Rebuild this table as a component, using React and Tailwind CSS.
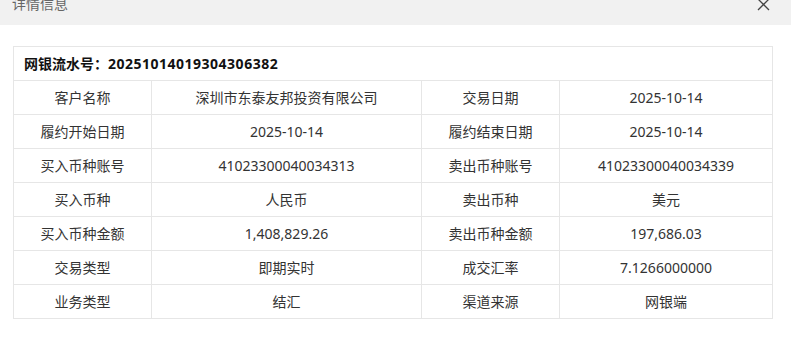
const rows = [
  ["客户名称", "深圳市东泰友邦投资有限公司", "交易日期", "2025-10-14"],
  ["履约开始日期", "2025-10-14", "履约结束日期", "2025-10-14"],
  ["买入币种账号", "41023300040034313", "卖出币种账号", "41023300040034339"],
  ["买入币种", "人民币", "卖出币种", "美元"],
  ["买入币种金额", "1,408,829.26", "卖出币种金额", "197,686.03"],
  ["交易类型", "即期实时", "成交汇率", "7.1266000000"],
  ["业务类型", "结汇", "渠道来源", "网银端"],
];

export default function App() {
  return (
    <div
      className="w-[791px] h-[346px] bg-white overflow-hidden text-[#333]"
      style={{ fontFamily: '"Noto Sans", "Noto Sans CJK SC", sans-serif' }}
    >
      <div className="h-[25px] bg-[#f1f1f1] flex items-start justify-between pl-[12px] pr-[21px] overflow-hidden">
        <span className="text-[14px] leading-[14px] text-[#666] -mt-[3px]">详情信息</span>
        <svg width="13" height="13" viewBox="0 0 13 13" className="-mt-[2px]">
          <path d="M1 1L12 12M12 1L1 12" stroke="#444" strokeWidth="1.3" fill="none" />
        </svg>
      </div>
      <div className="pt-[21px] pl-[13px]">
        <table className="border-collapse text-[14px] table-fixed w-[759px]">
          <colgroup>
            <col className="w-[138px]" />
            <col className="w-[270px]" />
            <col className="w-[138px]" />
            <col className="w-[213px]" />
          </colgroup>
          <tbody>
            <tr className="h-[34px]">
              <td colSpan={4} className="border border-[#e6e6e6] pl-[10px] font-bold text-[#111]">
                网银流水号：<span className="tracking-[0.5px]">20251014019304306382</span>
              </td>
            </tr>
            {rows.map((r, i) => (
              <tr key={i} className="h-[34px]">
                {r.map((c, j) => (
                  <td key={j} className="border border-[#e6e6e6] text-center p-0">
                    {c}
                  </td>
                ))}
              </tr>
            ))}
          </tbody>
        </table>
      </div>
    </div>
  );
}
